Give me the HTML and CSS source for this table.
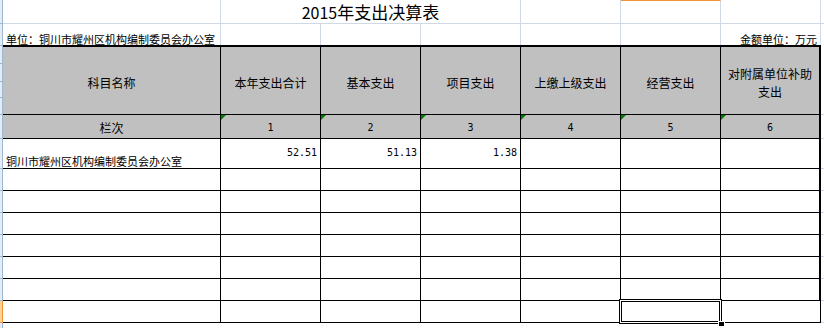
FILE: index.html
```html
<!DOCTYPE html>
<html lang="zh-CN">
<head>
<meta charset="utf-8">
<title>2015年支出决算表</title>
<link rel="stylesheet" href="styles.css">
</head>
<body>
<div class="page">
  <div class="strip">
    <div class="rh h24"></div>
    <div class="rh h22"></div>
    <div class="rh h18"></div>
    <div class="rh h18"></div>
    <div class="rh h16"></div>
    <div class="rh h17"></div>
    <div class="rh h24"></div>
    <div class="rh h30"></div>
    <div class="rh h22"></div>
    <div class="rh h22"></div>
    <div class="rh h22"></div>
    <div class="rh h22"></div>
    <div class="rh h22"></div>
    <div class="rh h22"></div>
    <div class="rh h22 rh-sel"></div>
    <div class="rh rest"></div>
  </div>
  <div class="sheet">
    <!-- row 1: title -->
    <div class="g"></div>
    <div class="g title"><span class="title-num">2015</span>年支出决算表</div>
    <div class="g"></div>
    <div class="g sel-col"></div>
    <div class="g"></div>
    <div class="g tail"></div>

    <!-- row 2: unit -->
    <div class="gr unit">单位：铜川市耀州区机构编制委员会办公室</div>
    <div class="gr"></div>
    <div class="gr"></div>
    <div class="gr"></div>
    <div class="gr"></div>
    <div class="gr"></div>
    <div class="gr unit-r">金额单位：万元</div>
    <div class="blank"></div>

    <!-- row 3: header -->
    <div class="hd">科目名称</div>
    <div class="hd">本年支出合计</div>
    <div class="hd">基本支出</div>
    <div class="hd">项目支出</div>
    <div class="hd">上缴上级支出</div>
    <div class="hd">经营支出</div>
    <div class="hd thick">对附属单位补助<br>支出</div>
    <div class="tl"></div>

    <!-- row 4: column numbers -->
    <div class="cn">栏次</div>
    <div class="cn num mark">1</div>
    <div class="cn num mark">2</div>
    <div class="cn num mark">3</div>
    <div class="cn num mark">4</div>
    <div class="cn num mark">5</div>
    <div class="cn num mark thick">6</div>
    <div class="tl"></div>

    <!-- row 5: data -->
    <div class="c name">铜川市耀州区机构编制委员会办公室</div>
    <div class="c val">52.51</div>
    <div class="c val">51.13</div>
    <div class="c val">1.38</div>
    <div class="c"></div>
    <div class="c"></div>
    <div class="c thick"></div>
    <div class="tl"></div>

    <!-- rows 6-11 -->
    <div class="c"></div><div class="c"></div><div class="c"></div><div class="c"></div><div class="c"></div><div class="c"></div><div class="c thick"></div><div class="tl"></div>
    <div class="c"></div><div class="c"></div><div class="c"></div><div class="c"></div><div class="c"></div><div class="c"></div><div class="c thick"></div><div class="tl"></div>
    <div class="c"></div><div class="c"></div><div class="c"></div><div class="c"></div><div class="c"></div><div class="c"></div><div class="c thick"></div><div class="tl"></div>
    <div class="c"></div><div class="c"></div><div class="c"></div><div class="c"></div><div class="c"></div><div class="c"></div><div class="c thick"></div><div class="tl"></div>
    <div class="c"></div><div class="c"></div><div class="c"></div><div class="c"></div><div class="c"></div><div class="c"></div><div class="c thick"></div><div class="tl"></div>
    <div class="c"></div><div class="c"></div><div class="c"></div><div class="c"></div><div class="c"></div><div class="c"></div><div class="c thick"></div><div class="tl"></div>

    <!-- row 12: selected cell -->
    <div class="c"></div>
    <div class="c"></div>
    <div class="c"></div>
    <div class="c"></div>
    <div class="c"></div>
    <div class="c active"><div class="selection"><div class="handle"></div></div></div>
    <div class="c"></div>
    <div class="tl"></div>
  </div>
</div>
</body>
</html>
```

FILE: styles.css
```css
html, body {
  margin: 0;
  padding: 0;
  background: #ffffff;
}

body {
  font-family: "Noto Sans CJK SC", "Noto Sans", sans-serif;
  color: #000000;
  width: 824px;
  height: 328px;
  overflow: hidden;
}

.page {
  display: flex;
  width: 824px;
  height: 328px;
}

/* row-header strip on the left */
.strip {
  width: 3px;
  display: flex;
  flex-direction: column;
}

.rh {
  box-sizing: border-box;
  background: #e4ecf7;
  border-right: 1px solid #9eb6ce;
  border-bottom: 1px solid #9eb6ce;
}

.h24 { height: 24px; }
.h22 { height: 22px; }
.h18 { height: 18px; }
.h17 { height: 17px; }
.h16 { height: 16px; }
.h30 { height: 30px; }
.rest { flex: 1; border-bottom: none; }

.rh-sel {
  background: #f8d597;
  border-right-color: #f29436;
  border-bottom-color: #f29436;
}

/* sheet grid */
.sheet {
  display: grid;
  grid-template-columns: 218px repeat(6, 100px) 3px;
  grid-template-rows: 24px 21px 70px 24px 30px repeat(7, 22px) 5px;
  width: 821px;
}

.sheet > div {
  box-sizing: border-box;
  min-width: 0;
}

/* light gridline cells */
.g {
  border-right: 1px solid #d0d7e5;
  border-bottom: 1px solid #d0d7e5;
}

.gr {
  border-right: 1px solid #d0d7e5;
}

.tail {
  border-right: none;
}

.tl {
  border-bottom: 1px solid #d0d7e5;
}

.sel-col {
  border-top: 1px solid #f29436;
}

.title {
  grid-column: span 3;
  display: flex;
  align-items: flex-end;
  justify-content: center;
  font-size: 17px;
  line-height: 20px;
  padding-bottom: 1px;
  white-space: nowrap;
}

.title-num {
  font-size: 16px;
}

.unit {
  display: flex;
  align-items: flex-end;
  font-size: 11px;
  line-height: 12px;
  padding-left: 3px;
  white-space: nowrap;
}

.unit-r {
  display: flex;
  align-items: flex-end;
  justify-content: flex-end;
  font-size: 11px;
  line-height: 12px;
  padding-right: 3px;
  white-space: nowrap;
}

/* table header */
.hd {
  background: #c0c0c0;
  border-top: 2px solid #000;
  border-right: 1px solid #000;
  border-bottom: 1px solid #000;
  display: flex;
  align-items: center;
  justify-content: center;
  text-align: center;
  font-size: 12px;
  line-height: 18px;
  padding-top: 5px;
}

.cn {
  background: #c0c0c0;
  border-right: 1px solid #000;
  border-bottom: 1px solid #000;
  display: flex;
  align-items: center;
  justify-content: center;
  font-size: 12px;
  line-height: 14px;
  padding-top: 3px;
  position: relative;
}

.num {
  font-family: "DejaVu Sans Mono", "Liberation Mono", monospace;
  font-size: 10px;
}

.mark::before {
  content: "";
  position: absolute;
  left: 0;
  top: 0;
  width: 0;
  height: 0;
  border-top: 5px solid #008000;
  border-right: 5px solid transparent;
}

/* body cells */
.c {
  border-right: 1px solid #000;
  border-bottom: 1px solid #000;
}

.thick {
  border-right-width: 2px;
}

.name {
  display: flex;
  align-items: flex-end;
  font-size: 11px;
  line-height: 13px;
  padding-left: 3px;
  padding-bottom: 0;
  white-space: nowrap;
}

.val {
  display: flex;
  align-items: center;
  justify-content: flex-end;
  font-family: "DejaVu Sans Mono", "Liberation Mono", monospace;
  font-size: 10px;
  padding-right: 3px;
  padding-bottom: 2px;
}

/* selected cell */
.active {
  position: relative;
}

.selection {
  position: absolute;
  left: -2px;
  top: -2px;
  width: 103px;
  height: 25px;
  box-sizing: border-box;
  border: 1px solid #000;
  box-shadow: inset 0 0 0 1px #fff, inset 0 0 0 2px #000;
}

.handle {
  position: absolute;
  left: 98px;
  top: 21px;
  width: 5px;
  height: 4px;
  background: #000;
  border: 1px solid #fff;
}
```
